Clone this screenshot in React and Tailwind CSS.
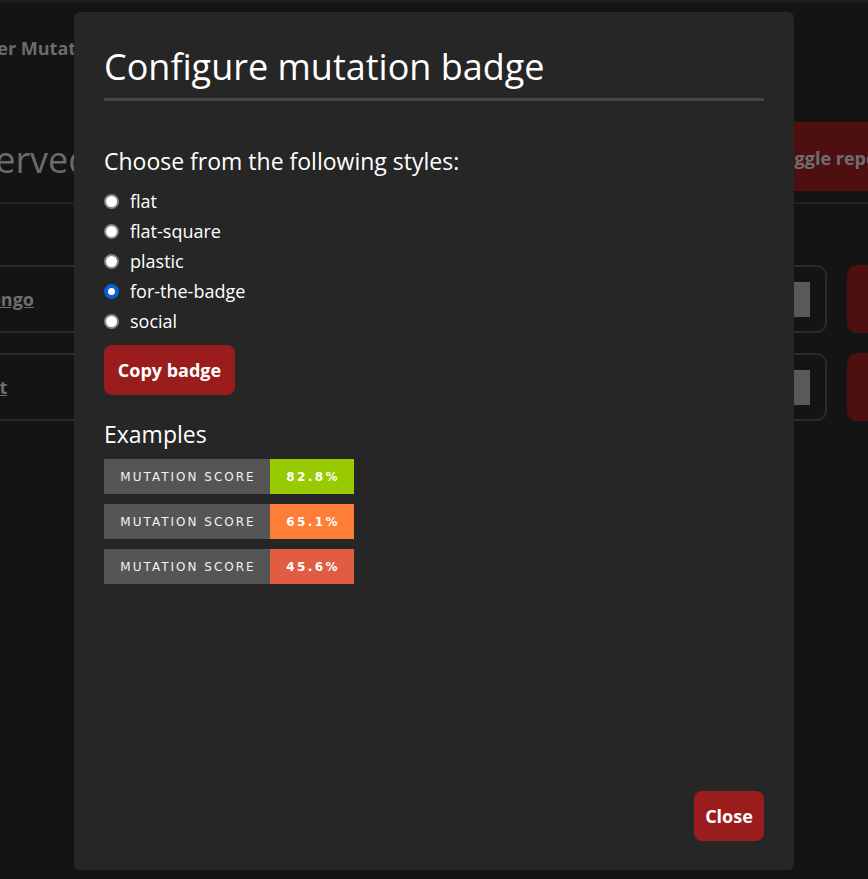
import { useState } from "react";

const styles = ["flat", "flat-square", "plastic", "for-the-badge", "social"];

const examples = [
  { score: "82.8%", color: "bg-[#97ca00]" },
  { score: "65.1%", color: "bg-[#fe7d37]" },
  { score: "45.6%", color: "bg-[#e05d44]" },
];

const Badge = ({ score, color }) => (
  <div className="flex h-[35px] w-[250px] font-['DejaVu_Sans',sans-serif] text-[12px] text-[#f2f2f2]">
    <div className="flex w-[166px] items-center justify-center bg-[#555555] pl-[2px] tracking-[2px]">MUTATION SCORE</div>
    <div className={`flex w-[84px] items-center justify-center pl-[2px] font-bold tracking-[2.4px] text-white ${color}`}>
      {score}
    </div>
  </div>
);

const BackgroundRow = ({ label }) => (
  <div className="flex h-[68px] items-stretch gap-[20px]">
    <div className="-ml-[20px] flex flex-1 items-center justify-between rounded-[10px] border-2 border-[#2a2a2a] pr-[15px]">
      <a className="-ml-[10px] text-[18px] font-bold text-[#6e6e6e] underline">{label}</a>
      <div className="h-[35px] w-[18px] bg-[#595959]" />
    </div>
    <div className="w-[21px] rounded-l-[10px] bg-[#4d0f0f]" />
  </div>
);

const App = () => {
  const [style, setStyle] = useState("for-the-badge");

  return (
    <div className="relative h-[879px] w-[868px] overflow-hidden bg-[#141414] font-['Open_Sans','Noto_Sans',sans-serif]">
      <div className="h-[3px] bg-[#1d1c24]" />

      {/* page behind the modal */}
      <div>
        <div className="-ml-[50px] pt-[32px] text-[18px] font-bold whitespace-nowrap text-[#6b6b6b]">Stryker Mutator</div>
        <div className="mt-[60px] flex items-center justify-between">
          <div className="-ml-[72px] pt-[6px] text-[36px] text-[#6b6b6b]">Observed</div>
          <div className="flex h-[69px] w-[150px] items-center rounded-l-[8px] bg-[#4d0f0f] pt-[4px] pl-[55px] text-[18px] font-bold whitespace-nowrap text-[#6e6e6e]">
            Toggle report
          </div>
        </div>
        <div className="mt-[11px] h-[2px] bg-[#222222]" />
        <div className="mt-[61px] flex flex-col gap-[20px]">
          <BackgroundRow label="mongo" />
          <BackgroundRow label="test" />
        </div>
      </div>

      {/* modal */}
      <div className="absolute top-[12px] left-[74px] flex h-[858px] w-[720px] flex-col rounded-[6px] bg-[#262626] px-[30px] pt-[40px] pb-[29px] text-white">
        <h2 className="text-[36px] leading-[30px]">Configure mutation badge</h2>
        <div className="mt-[16px] h-[3px] bg-[#454545]" />

        <p className="mt-[45px] text-[23px] leading-[30px]">Choose from the following styles:</p>
        <div className="mt-[10px] flex flex-col">
          {styles.map((s) => (
            <label key={s} className="flex h-[30px] items-center gap-[11px] text-[18px]">
              <input
                type="radio"
                name="style"
                checked={style === s}
                onChange={() => setStyle(s)}
                className="h-[15px] w-[15px] appearance-none rounded-full border-2 border-[#858585] bg-white checked:border-[4px] checked:border-[#0a5fd6]"
              />
              {s}
            </label>
          ))}
        </div>

        <button className="mt-[9px] h-[50px] w-[131px] rounded-[8px] bg-[#9b1c1c] text-[18px] font-bold">
          Copy badge
        </button>

        <h3 className="mt-[24px] text-[23px] leading-[30px]">Examples</h3>
        <div className="mt-[10px] flex flex-col gap-[10px]">
          {examples.map((e) => (
            <Badge key={e.score} {...e} />
          ))}
        </div>

        <div className="mt-auto flex justify-end">
          <button className="h-[50px] w-[70px] rounded-[8px] bg-[#9b1c1c] text-[18px] font-bold">Close</button>
        </div>
      </div>
    </div>
  );
};

export default App;
